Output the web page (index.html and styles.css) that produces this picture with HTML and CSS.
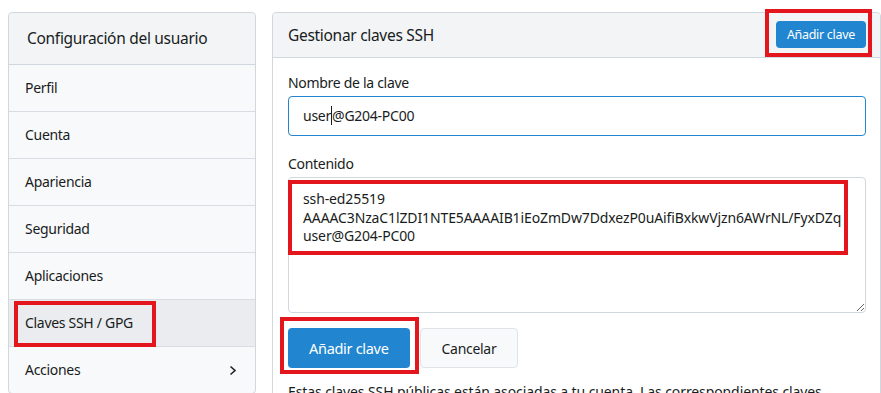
FILE: index.html
```html
<!DOCTYPE html>
<html lang="es">
<head>
<meta charset="utf-8">
<title>Claves SSH / GPG</title>
<link rel="stylesheet" href="styles.css">
</head>
<body>
<div class="page">
  <nav class="sidebar">
    <div class="sidebar-head">Configuración del usuario</div>
    <div class="item">Perfil</div>
    <div class="item">Cuenta</div>
    <div class="item">Apariencia</div>
    <div class="item">Seguridad</div>
    <div class="item">Aplicaciones</div>
    <div class="item active">Claves SSH / GPG<span class="mark mark-nav"></span></div>
    <div class="item last">Acciones
      <svg class="chev" width="8" height="11" viewBox="0 0 8 11"><path d="M1.5 1.5 L6 5.5 L1.5 9.5" fill="none" stroke="#222" stroke-width="1.6"/></svg>
    </div>
  </nav>
  <main class="panel">
    <div class="panel-head">
      <span class="panel-title">Gestionar claves SSH</span>
      <span class="btn-wrap"><button class="btn btn-small">Añadir clave</button><span class="mark mark-top"></span></span>
    </div>
    <div class="panel-body">
      <div class="label">Nombre de la clave</div>
      <div class="input">user<span class="caret"></span>@G204-PC00</div>
      <div class="label label-gap">Contenido</div>
      <div class="ta-wrap">
        <textarea class="textarea">ssh-ed25519
AAAAC3NzaC1lZDI1NTE5AAAAIB1iEoZmDw7DdxezP0uAifiBxkwVjzn6AWrNL/FyxDZq
user@G204-PC00</textarea>
        <span class="mark mark-ta"></span>
      </div>
      <div class="actions">
        <span class="btn-wrap"><button class="btn btn-primary">Añadir clave</button><span class="mark mark-primary"></span></span>
        <button class="btn btn-basic">Cancelar</button>
      </div>
      <p class="note">Estas claves SSH públicas están asociadas a tu cuenta. Las correspondientes claves privadas permiten el acceso completo a tus repositorios.</p>
    </div>
  </main>
</div>
</body>
</html>
```
FILE: styles.css
```css
* { box-sizing: border-box; }
html, body { margin: 0; background: #fff; overflow: hidden; }
body {
  font-family: "Noto Sans", "Open Sans", sans-serif;
  color: #181c21;
  font-size: 14px;
}
.page {
  display: flex;
  align-items: flex-start;
  gap: 16px;
  padding: 12px 0 0 8px;
  height: 393px;
}
.sidebar {
  width: 248px;
  flex-shrink: 0;
  border: 1px solid #d0d7de;
  border-radius: 4px;
  background: #f8f9fb;
}
.sidebar-head {
  padding: 14px 18px;
  font-size: 15.5px;
  line-height: 23px;
  letter-spacing: -0.3px;
  background: #f3f4f6;
  border-bottom: 1px solid #d0d7de;
  border-radius: 4px 4px 0 0;
}
.item {
  position: relative;
  display: flex;
  align-items: center;
  justify-content: space-between;
  padding: 13px 16px;
  line-height: 20px;
  letter-spacing: -0.3px;
  border-bottom: 1px solid #d8dde3;
}
.item.last { border-bottom: none; }
.item.active { background: #ebecef; }
.chev { margin-right: 2px; }
.panel {
  flex: 1;
  min-width: 0;
  border: 1px solid #d0d7de;
  border-radius: 4px;
  height: 400px;
}
.panel-head {
  display: flex;
  align-items: center;
  justify-content: space-between;
  padding: 8px 14px 9px 15px;
  background: #f3f4f6;
  border-bottom: 1px solid #d0d7de;
  border-radius: 4px 4px 0 0;
}
.panel-title {
  font-size: 15.5px;
  letter-spacing: -0.3px;
}
.btn-wrap { position: relative; display: inline-flex; }
.btn {
  font-family: inherit;
  border-radius: 4px;
  cursor: pointer;
  letter-spacing: -0.3px;
}
.btn-small {
  height: 27px;
  padding: 0 11px;
  font-size: 12.5px;
  color: #fff;
  background: #2185d0;
  border: none;
}
.panel-body {
  padding: 15px 14px 0 15px;
}
.label {
  line-height: 20px;
  margin-bottom: 3px;
  letter-spacing: -0.3px;
}
.label-gap { margin-top: 18px; }
.input {
  height: 40px;
  border: 1px solid #2185d0;
  border-radius: 4px;
  padding: 0 14px;
  line-height: 38px;
  letter-spacing: -0.25px;
  background: #fff;
}
.caret {
  display: inline-block;
  width: 1px;
  height: 19px;
  background: #181c21;
  vertical-align: -4px;
}
.ta-wrap { position: relative; }
.textarea {
  display: block;
  width: 100%;
  height: 136px;
  padding: 12px 14px;
  border: 1px solid #d0d7de;
  border-radius: 4px;
  font-family: inherit;
  font-size: 14px;
  line-height: 18.5px;
  letter-spacing: -0.12px;
  color: #181c21;
  resize: vertical;
  white-space: pre;
  overflow: hidden;
}
.actions {
  display: flex;
  gap: 10px;
  margin-top: 15px;
}
.btn-primary {
  height: 40px;
  padding: 0 21px;
  font-size: 14.5px;
  color: #fff;
  background: #2185d0;
  border: none;
}
.btn-basic {
  height: 40px;
  padding: 0 21px;
  font-size: 14px;
  color: #181c21;
  background: #f8f9fb;
  border: 1px solid #dfe3e8;
}
.note {
  margin: 14px 0 0;
  line-height: 20px;
  letter-spacing: -0.1px;
}
.mark {
  position: absolute;
  border: 4px solid #e3161d;
  pointer-events: none;
}
.mark-nav { left: 5px; top: 1px; width: 142px; height: 46px; }
.mark-top { right: -6px; top: -12px; width: 107px; height: 48px; }
.mark-ta { left: 0; top: 3px; width: 560px; height: 75px; }
.mark-primary { left: -8px; top: -11px; width: 139px; height: 57px; }
```
